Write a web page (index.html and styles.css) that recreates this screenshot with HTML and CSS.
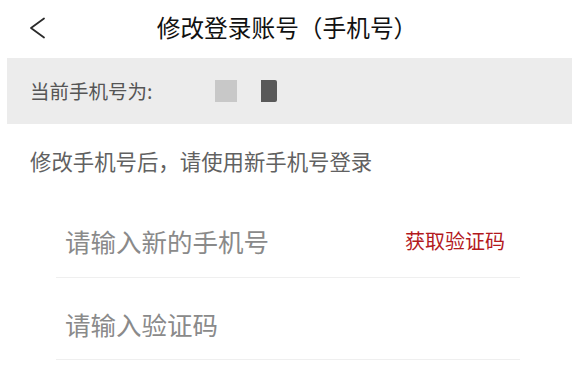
FILE: index.html
```html
<!DOCTYPE html>
<html lang="zh-CN">
<head>
<meta charset="utf-8">
<title>修改登录账号（手机号）</title>
<link rel="stylesheet" href="styles.css">
</head>
<body>
<div class="page">
  <header class="header">
    <span class="back">
      <svg width="17" height="22" viewBox="0 0 17 22"><path d="M15 1.5 L2 11 L15 20.5" fill="none" stroke="#2a2a2a" stroke-width="1.8" stroke-linecap="round" stroke-linejoin="round"/></svg>
    </span>
    <h1 class="title">修改登录账号（手机号）</h1>
    <span class="spacer"></span>
  </header>
  <div class="current">
    <span class="current-label">当前手机号为:</span>
    <span class="mask mask-light"></span>
    <span class="mask mask-dark"></span>
  </div>
  <p class="hint">修改手机号后，请使用新手机号登录</p>
  <div class="form">
    <div class="row row-first">
      <span class="placeholder">请输入新的手机号</span>
      <span class="code-btn">获取验证码</span>
    </div>
    <div class="row">
      <span class="placeholder">请输入验证码</span>
    </div>
  </div>
</div>
</body>
</html>
```
FILE: styles.css
```css
html, body {
  margin: 0;
  padding: 0;
  background: #ffffff;
}
.page {
  width: 580px;
  height: 373px;
  overflow: hidden;
  font-family: "Noto Sans CJK SC", "Noto Sans", sans-serif;
}
.header {
  height: 58px;
  display: grid;
  grid-template-columns: 1fr auto 1fr;
  align-items: center;
  box-sizing: border-box;
  padding-bottom: 5px;
}
.back {
  padding-left: 29px;
  display: flex;
  align-items: center;
  padding-top: 3px;
}
.title {
  margin: 0 0 0 -6px;
  font-size: 23.7px;
  font-weight: 400;
  color: #111111;
  line-height: 30px;
}
.current {
  margin: 0 8px 0 7px;
  height: 66px;
  background: #ececec;
  display: flex;
  align-items: center;
  padding-left: 23px;
}
.current-label {
  font-size: 19.5px;
  color: #555555;
  line-height: 26px;
}
.mask {
  display: inline-block;
  height: 22px;
}
.mask-light {
  width: 22px;
  background: #c8c8c8;
  margin-left: 63px;
}
.mask-dark {
  width: 16px;
  background: #595959;
  margin-left: 24px;
  border-radius: 0 2px 2px 0;
}
.hint {
  margin: 22px 0 0 30px;
  font-size: 21.4px;
  color: #616161;
  line-height: 30px;
}
.form {
  margin: 19px 60px 0 56px;
}
.row {
  height: 82px;
  box-sizing: border-box;
  border-bottom: 1px solid #efefef;
  display: flex;
  align-items: center;
  justify-content: space-between;
  padding: 10px 15px 0 9px;
}
.row-first {
  height: 83px;
}
.placeholder {
  font-size: 25.5px;
  color: #8a8a8a;
  line-height: 32px;
}
.code-btn {
  font-size: 20px;
  color: #b3191d;
  line-height: 26px;
}
```
